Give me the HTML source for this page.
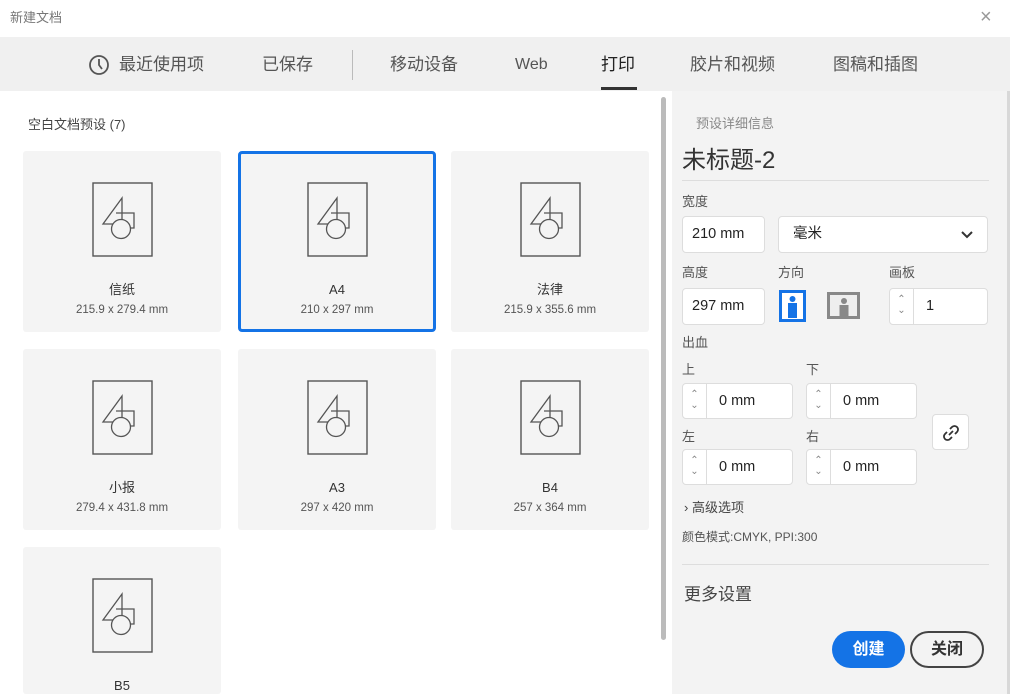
<!DOCTYPE html><html><head><meta charset="utf-8"><style>
*{margin:0;padding:0;box-sizing:border-box}
html,body{width:1010px;height:694px;overflow:hidden}
body{background:#fff;font-family:"Liberation Sans","Noto Sans CJK SC",sans-serif;color:#333;position:relative}
.a{position:absolute}
.tab{position:absolute;top:54px;font-size:17px;line-height:22px;height:22px;color:#555}
.card{position:absolute;width:198px;height:181px;background:#f4f4f4;border-radius:3px;overflow:hidden}
.card svg{position:absolute;left:69px;top:31px}
.card .n{position:absolute;top:131px;width:100%;text-align:center;font-size:13px;line-height:16px;color:#333}
.card .s{position:absolute;top:152px;width:100%;text-align:center;font-size:11.5px;line-height:14px;color:#555}
.lbl{position:absolute;font-size:13px;line-height:16px;color:#555}
.inp{position:absolute;background:#fff;border:1px solid #ddd;border-radius:4px;font-size:14.5px;color:#222;line-height:34px}
.spin{position:absolute;left:0;top:0;bottom:0;width:24px;border-right:1px solid #ddd;color:#888;font-size:10px;line-height:11px;text-align:center;padding-top:5px}
</style></head><body>
<div class="a" style="left:10px;top:10px;font-size:13px;line-height:16px;color:#777">新建文档</div>
<div class="a" style="left:980px;top:6px;font-size:20px;line-height:22px;color:#999">×</div>
<div class="a" style="left:0;top:37px;width:1010px;height:54px;background:#f0f0f0"></div>
<svg class="a" style="left:88px;top:54px" width="22" height="22" viewBox="0 0 22 22"><circle cx="11" cy="11" r="9" fill="none" stroke="#555" stroke-width="1.8"/><path d="M11 5v6l3 4" fill="none" stroke="#555" stroke-width="1.8"/></svg>
<div class="tab" style="left:119px">最近使用项</div>
<div class="tab" style="left:262px">已保存</div>
<div class="a" style="left:352px;top:50px;width:1px;height:30px;background:#bbb"></div>
<div class="tab" style="left:390px">移动设备</div>
<div class="tab" style="left:515px;font-size:16px">Web</div>
<div class="tab" style="left:601px;color:#222">打印</div>
<div class="a" style="left:601px;top:87px;width:36px;height:3px;background:#333"></div>
<div class="tab" style="left:690px">胶片和视频</div>
<div class="tab" style="left:833px">图稿和插图</div>
<div class="a" style="left:28px;top:117px;font-size:13px;line-height:16px;color:#444">空白文档预设 (7)</div>
<div class="a" style="left:661px;top:97px;width:5px;height:543px;background:#bbb;border-radius:3px"></div>
<div class="a" style="left:672px;top:91px;width:338px;height:603px;background:#f3f3f3;border-right:3px solid #d8d8d8"></div>

<div class="card" style="left:23px;top:151px"><svg width="62" height="76"><rect x="1" y="1" width="59" height="73" fill="none" stroke="#555" stroke-width="1.4"/><path d="M30 16 L11 42 H30 Z M24 31 H42 V46 H36" fill="none" stroke="#555" stroke-width="1.3"/><circle cx="29" cy="47" r="9.5" fill="#f4f4f4" stroke="#555" stroke-width="1.3"/></svg><div class="n">信纸</div><div class="s">215.9 x 279.4 mm</div></div>
<div class="card" style="left:238px;top:151px;border:3px solid #1473e6;border-radius:4px"><svg width="62" height="76" style="left:66px;top:28px"><rect x="1" y="1" width="59" height="73" fill="none" stroke="#555" stroke-width="1.4"/><path d="M30 16 L11 42 H30 Z M24 31 H42 V46 H36" fill="none" stroke="#555" stroke-width="1.3"/><circle cx="29" cy="47" r="9.5" fill="#f4f4f4" stroke="#555" stroke-width="1.3"/></svg><div class="n" style="top:128px">A4</div><div class="s" style="top:149px">210 x 297 mm</div></div>
<div class="card" style="left:451px;top:151px"><svg width="62" height="76"><rect x="1" y="1" width="59" height="73" fill="none" stroke="#555" stroke-width="1.4"/><path d="M30 16 L11 42 H30 Z M24 31 H42 V46 H36" fill="none" stroke="#555" stroke-width="1.3"/><circle cx="29" cy="47" r="9.5" fill="#f4f4f4" stroke="#555" stroke-width="1.3"/></svg><div class="n">法律</div><div class="s">215.9 x 355.6 mm</div></div>
<div class="card" style="left:23px;top:349px"><svg width="62" height="76"><rect x="1" y="1" width="59" height="73" fill="none" stroke="#555" stroke-width="1.4"/><path d="M30 16 L11 42 H30 Z M24 31 H42 V46 H36" fill="none" stroke="#555" stroke-width="1.3"/><circle cx="29" cy="47" r="9.5" fill="#f4f4f4" stroke="#555" stroke-width="1.3"/></svg><div class="n">小报</div><div class="s">279.4 x 431.8 mm</div></div>
<div class="card" style="left:238px;top:349px"><svg width="62" height="76"><rect x="1" y="1" width="59" height="73" fill="none" stroke="#555" stroke-width="1.4"/><path d="M30 16 L11 42 H30 Z M24 31 H42 V46 H36" fill="none" stroke="#555" stroke-width="1.3"/><circle cx="29" cy="47" r="9.5" fill="#f4f4f4" stroke="#555" stroke-width="1.3"/></svg><div class="n">A3</div><div class="s">297 x 420 mm</div></div>
<div class="card" style="left:451px;top:349px"><svg width="62" height="76"><rect x="1" y="1" width="59" height="73" fill="none" stroke="#555" stroke-width="1.4"/><path d="M30 16 L11 42 H30 Z M24 31 H42 V46 H36" fill="none" stroke="#555" stroke-width="1.3"/><circle cx="29" cy="47" r="9.5" fill="#f4f4f4" stroke="#555" stroke-width="1.3"/></svg><div class="n">B4</div><div class="s">257 x 364 mm</div></div>
<div class="card" style="left:23px;top:547px;height:147px"><svg width="62" height="76"><rect x="1" y="1" width="59" height="73" fill="none" stroke="#555" stroke-width="1.4"/><path d="M30 16 L11 42 H30 Z M24 31 H42 V46 H36" fill="none" stroke="#555" stroke-width="1.3"/><circle cx="29" cy="47" r="9.5" fill="#f4f4f4" stroke="#555" stroke-width="1.3"/></svg><div class="n">B5</div></div>

<div class="lbl" style="left:696px;top:116px;color:#888">预设详细信息</div>
<div class="a" style="left:682px;top:146px;font-size:24px;line-height:30px;color:#333">未标题-2</div>
<div class="a" style="left:682px;top:180px;width:307px;height:1px;background:#ddd"></div>
<div class="lbl" style="left:682px;top:194px">宽度</div>
<div class="inp" style="left:682px;top:216px;width:83px;height:37px;padding-left:9px">210 mm</div>
<div class="inp" style="left:778px;top:216px;width:210px;height:37px;padding-left:14px">毫米<svg style="position:absolute;right:14px;top:14px" width="12" height="8"><path d="M1 1l5 5 5-5" fill="none" stroke="#333" stroke-width="2"/></svg></div>
<div class="lbl" style="left:682px;top:265px">高度</div>
<div class="lbl" style="left:778px;top:265px">方向</div>
<div class="lbl" style="left:889px;top:265px">画板</div>
<div class="inp" style="left:682px;top:288px;width:83px;height:37px;padding-left:9px">297 mm</div>
<svg class="a" style="left:779px;top:290px" width="28" height="32"><rect x="1.5" y="1.5" width="24" height="29" fill="#fff" stroke="#1473e6" stroke-width="3"/><circle cx="13.5" cy="9" r="3" fill="#1473e6"/><rect x="9" y="13" width="9" height="15" fill="#1473e6"/></svg>
<svg class="a" style="left:827px;top:292px" width="34" height="28"><rect x="1.5" y="1.5" width="30" height="24" fill="#eee" stroke="#888" stroke-width="3"/><circle cx="17" cy="9" r="3" fill="#888"/><rect x="12.5" y="13" width="9" height="11" fill="#888"/></svg>
<div class="inp" style="left:889px;top:288px;width:99px;height:37px;padding-left:36px"><div class="spin">⌃<br>⌄</div>1</div>
<div class="lbl" style="left:682px;top:335px">出血</div>
<div class="lbl" style="left:682px;top:362px">上</div>
<div class="lbl" style="left:806px;top:362px">下</div>
<div class="inp" style="left:682px;top:383px;width:111px;height:36px;padding-left:36px"><div class="spin">⌃<br>⌄</div>0 mm</div>
<div class="inp" style="left:806px;top:383px;width:111px;height:36px;padding-left:36px"><div class="spin">⌃<br>⌄</div>0 mm</div>
<div class="lbl" style="left:682px;top:429px">左</div>
<div class="lbl" style="left:806px;top:429px">右</div>
<div class="inp" style="left:682px;top:449px;width:111px;height:36px;padding-left:36px"><div class="spin">⌃<br>⌄</div>0 mm</div>
<div class="inp" style="left:806px;top:449px;width:111px;height:36px;padding-left:36px"><div class="spin">⌃<br>⌄</div>0 mm</div>
<div class="inp" style="left:932px;top:414px;width:37px;height:36px"><svg style="position:absolute;left:9px;top:9px" width="18" height="18"><g fill="none" stroke="#333" stroke-width="1.8"><path d="M8 5l2-2a3 3 0 0 1 5 5l-2 2"/><path d="M10 13l-2 2a3 3 0 0 1-5-5l2-2"/><path d="M7 11l4-4"/></g></svg></div>
<div class="lbl" style="left:684px;top:500px;color:#444">›&nbsp;高级选项</div>
<div class="lbl" style="left:682px;top:529px;font-size:12px">颜色模式:CMYK, PPI:300</div>
<div class="a" style="left:682px;top:564px;width:307px;height:1px;background:#ddd"></div>
<div class="a" style="left:684px;top:584px;font-size:17px;line-height:22px;color:#444">更多设置</div>
<div class="a" style="left:832px;top:631px;width:73px;height:37px;border-radius:19px;background:#1473e6;color:#fff;font-size:16px;font-weight:bold;text-align:center;line-height:37px">创建</div>
<div class="a" style="left:910px;top:631px;width:74px;height:37px;border-radius:19px;border:2px solid #444;color:#333;font-size:16px;font-weight:bold;text-align:center;line-height:33px">关闭</div>
</body></html>
